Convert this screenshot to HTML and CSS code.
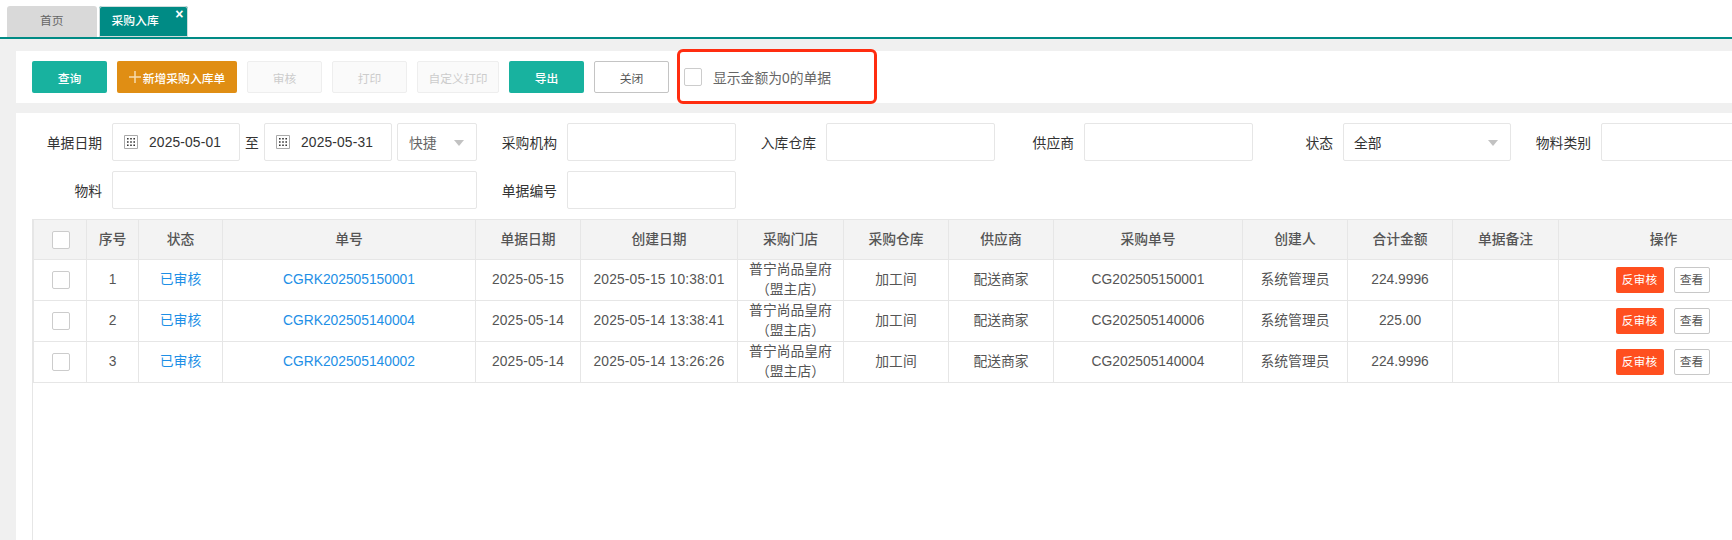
FILE: index.html
```html
<!DOCTYPE html>
<html lang="zh-CN">
<head>
<meta charset="utf-8">
<title>采购入库</title>
<link rel="stylesheet" href="styles.css">
</head>
<body>
<nav class="tabs">
  <div class="tab">首页</div>
  <div class="tab active">采购入库<span class="tab-close">×</span></div>
</nav>
<main class="content">
  <section class="toolbar">
    <button class="btn teal w75">查询</button>
    <button class="btn orange w120"><svg class="plus" width="12" height="12" viewBox="0 0 12 12"><path d="M6 0v12M0 6h12" stroke="#f6dcae" stroke-width="1.5" fill="none"/></svg>新增采购入库单</button>
    <button class="btn disabled w75">审核</button>
    <button class="btn disabled w75">打印</button>
    <button class="btn disabled w82">自定义打印</button>
    <button class="btn teal w75">导出</button>
    <button class="btn plain w75">关闭</button>
    <label class="zero"><span class="check"></span><span>显示金额为0的单据</span></label>
    <div class="redbox"></div>
  </section>
  <section class="panel">
    <form class="filters">
      <div class="frow">
        <span class="lab l90">单据日期</span>
        <div class="inp date"><svg width="14" height="14" viewBox="0 0 14 14"><path d="M.5.5h13v13H.5z" fill="none" stroke="#aaa"/><path d="M3 3h1.6v1.6H3zM6.2 3h1.6v1.6H6.2zM9.4 3H11v1.6H9.4zM3 6.2h1.6v1.6H3zM6.2 6.2h1.6v1.6H6.2zM9.4 6.2H11v1.6H9.4zM3 9.4h1.6V11H3zM6.2 9.4h1.6V11H6.2zM9.4 9.4H11V11H9.4z" fill="#333"/></svg><span class="dt">2025-05-01</span></div>
        <span class="to">至</span>
        <div class="inp date"><svg width="14" height="14" viewBox="0 0 14 14"><path d="M.5.5h13v13H.5z" fill="none" stroke="#aaa"/><path d="M3 3h1.6v1.6H3zM6.2 3h1.6v1.6H6.2zM9.4 3H11v1.6H9.4zM3 6.2h1.6v1.6H3zM6.2 6.2h1.6v1.6H6.2zM9.4 6.2H11v1.6H9.4zM3 9.4h1.6V11H3zM6.2 9.4h1.6V11H6.2zM9.4 9.4H11V11H9.4z" fill="#333"/></svg><span class="dt">2025-05-31</span></div>
        <div class="inp sel quick">快捷<i class="caret"></i></div>
        <span class="lab l80">采购机构</span>
        <div class="inp w169"></div>
        <span class="lab l80">入库仓库</span>
        <div class="inp w169"></div>
        <span class="lab l79">供应商</span>
        <div class="inp w169"></div>
        <span class="lab l80">状态</span>
        <div class="inp sel status">全部<i class="caret"></i></div>
        <span class="lab l80">物料类别</span>
        <div class="inp w169"></div>
      </div>
      <div class="frow">
        <span class="lab l90">物料</span>
        <div class="inp wide"></div>
        <span class="lab l80">单据编号</span>
        <div class="inp w169"></div>
      </div>
    </form>
    <div class="table-wrap">
      <table class="grid">
        <colgroup>
          <col class="c1"><col class="c2"><col class="c3"><col class="c4"><col class="c5"><col class="c6"><col class="c7"><col class="c8"><col class="c9"><col class="c10"><col class="c11"><col class="c12"><col class="c13"><col class="c14">
        </colgroup>
        <thead>
          <tr><th><span class="check"></span></th><th>序号</th><th>状态</th><th>单号</th><th>单据日期</th><th>创建日期</th><th>采购门店</th><th>采购仓库</th><th>供应商</th><th>采购单号</th><th>创建人</th><th>合计金额</th><th>单据备注</th><th>操作</th></tr>
        </thead>
        <tbody>
          <tr><td><span class="check"></span></td><td>1</td><td class="link">已审核</td><td class="link">CGRK202505150001</td><td class="dt">2025-05-15</td><td class="dt">2025-05-15 10:38:01</td><td class="store">普宁尚品皇府<br>（盟主店）</td><td>加工间</td><td>配送商家</td><td>CG202505150001</td><td>系统管理员</td><td>224.9996</td><td></td><td class="ops"><span class="act red">反审核</span><span class="act view">查看</span></td></tr>
          <tr><td><span class="check"></span></td><td>2</td><td class="link">已审核</td><td class="link">CGRK202505140004</td><td class="dt">2025-05-14</td><td class="dt">2025-05-14 13:38:41</td><td class="store">普宁尚品皇府<br>（盟主店）</td><td>加工间</td><td>配送商家</td><td>CG202505140006</td><td>系统管理员</td><td>225.00</td><td></td><td class="ops"><span class="act red">反审核</span><span class="act view">查看</span></td></tr>
          <tr><td><span class="check"></span></td><td>3</td><td class="link">已审核</td><td class="link">CGRK202505140002</td><td class="dt">2025-05-14</td><td class="dt">2025-05-14 13:26:26</td><td class="store">普宁尚品皇府<br>（盟主店）</td><td>加工间</td><td>配送商家</td><td>CG202505140004</td><td>系统管理员</td><td>224.9996</td><td></td><td class="ops"><span class="act red">反审核</span><span class="act view">查看</span></td></tr>
        </tbody>
      </table>
    </div>
  </section>
</main>
</body>
</html>
```
FILE: styles.css
```css
* { box-sizing: border-box; }
html, body { margin: 0; height: 100%; }
body {
  width: 1732px; height: 540px; overflow: hidden; background: #fff; color: #333;
  font-family: "Liberation Sans", "Noto Sans CJK SC", sans-serif; font-size: 13.8px;
  display: flex; flex-direction: column;
}
.tabs {
  height: 39px; flex: none; padding: 6px 0 0 7px; display: flex; gap: 1.5px;
  border-bottom: 2px solid #008b85;
}
.tab {
  width: 90px; height: 31px; background: #d9d9d9; border-radius: 3px 3px 0 0; color: #666;
  font-size: 11.8px; line-height: 31px; padding-left: 33px; position: relative;
}
.tab.active { width: 89px; background: #008b85; color: #fff; padding-left: 13px; font-weight: 500; box-shadow: 0 0 0 1px #cfdcdc inset; }
.tab-close { position: absolute; right: 4px; top: -4px; font-size: 14px; font-weight: 700; line-height: 24px; color: #fff; }
.content {
  flex: 1; min-height: 0; background: #f0f0f0; padding: 12px 0 0 16px;
  display: flex; flex-direction: column; gap: 10px;
}
.toolbar {
  height: 52px; flex: none; background: #fff; padding: 10px 0 0 16px; display: flex; align-items: flex-start; gap: 10px; position: relative;
}
.btn {
  height: 32px; border: 1px solid transparent; border-radius: 2px; padding: 0; font: inherit; font-size: 11.8px;
  display: flex; align-items: center; justify-content: center;
}
.w75 { width: 75px; }
.w82 { width: 82px; }
.w120 { width: 120px; }
.teal { background: #18b29f; color: #fff; font-weight: 500; }
.orange { background: #e08e14; color: #fff; font-weight: 500; }
.plus { margin-right: 2px; }
.disabled { background: #fafafa; border-color: #eee; color: #ccc; }
.plain { background: #fff; border-color: #c4c4c4; color: #555; }
.zero { display: flex; align-items: center; height: 32px; margin-left: 5px; color: #666; gap: 11px; font-size: 13.8px; }
.check {
  display: inline-block; width: 18px; height: 18px; background: #fff; border: 1px solid #ccc; border-radius: 2px; vertical-align: middle;
}
.redbox {
  position: absolute; left: 661px; top: -2px; width: 200px; height: 55px; border: 3px solid #ff2d10; border-radius: 6px; pointer-events: none;
}
.panel { flex: 1; min-height: 0; background: #fff; display: flex; flex-direction: column; padding-top: 10px; overflow: hidden; }
.filters { display: flex; flex-direction: column; gap: 10px; }
.frow { display: flex; align-items: center; height: 38px; white-space: nowrap; }
.lab { text-align: right; padding-right: 10px; flex: none; color: #333; }
.l90 { width: 96px; }
.inp {
  height: 38px; flex: none; background: #fff; border: 1px solid #e6e6e6; border-radius: 2px; display: flex; align-items: center; color: #333; position: relative;
}
.date { width: 128px; padding-left: 11px; gap: 11px; }
.dt { letter-spacing: .15px; }
.to { width: 24px; text-align: center; flex: none; }
.quick { width: 80px; margin-left: 5px; padding-left: 11px; color: #666; }
.status { width: 168px; padding-left: 10px; }
.caret { position: absolute; right: 12px; top: 16px; border: 5.5px solid transparent; border-top: 6px solid #c2c2c2; border-bottom: 0; }
.l80 { width: 90px; }
.l79 { width: 89px; }
.w169 { width: 169px; }
.wide { width: 365px; }
.table-wrap { flex: 1; min-height: 0; margin: 10px 0 0 16px; border-left: 1px solid #e6e6e6; overflow: hidden; }
.grid { table-layout: fixed; width: 1735px; border-collapse: collapse; color: #555; }
.c1 { width: 53px; } .c2 { width: 52px; } .c3 { width: 84px; } .c4 { width: 253px; } .c5 { width: 105px; }
.c6 { width: 157px; } .c7 { width: 106px; } .c8 { width: 105px; } .c9 { width: 105px; } .c10 { width: 189px; }
.c11 { width: 105px; } .c12 { width: 105px; } .c13 { width: 106px; } .c14 { width: 210px; }
th, td { border: 1px solid #e6e6e6; text-align: center; padding: 0; vertical-align: middle; line-height: 20px; }
th .check, td .check { margin-left: 2px; }
thead tr { height: 40px; }
th { background: #f3f3f3; font-weight: 500; font-size: 13.8px; color: #555; }
tbody tr { height: 41px; }
tbody td { padding-bottom: 1px; }
.link { color: #1e8fe6; }
.store { line-height: 20px; white-space: nowrap; padding-bottom: 0; }
.ops { padding-right: 2px; padding-bottom: 0; }
.act { display: inline-block; height: 26px; line-height: 24px; font-size: 11.8px; border-radius: 2px; vertical-align: middle; }
.red { width: 48px; background: #ff4f1f; color: #fff; line-height: 26px; }
.view { width: 36px; margin-left: 10px; border: 1px solid #c8c8c8; color: #555; background: #fff; }
```
